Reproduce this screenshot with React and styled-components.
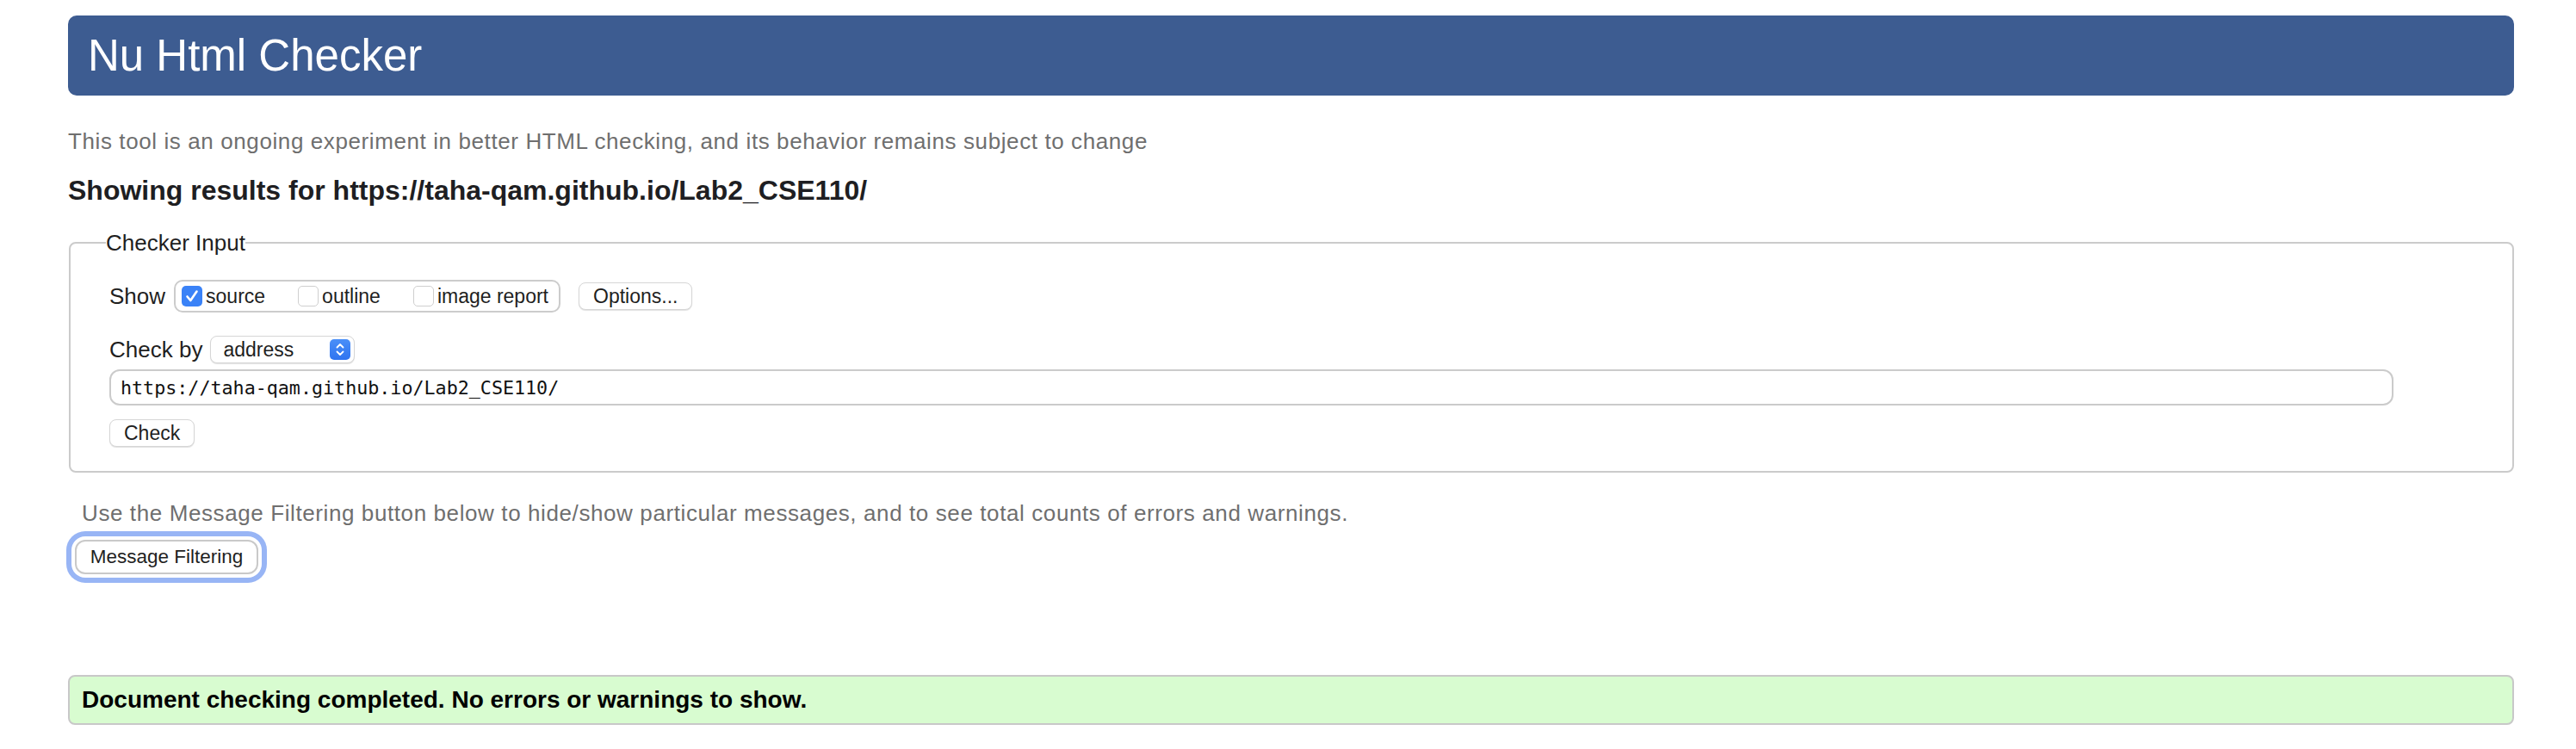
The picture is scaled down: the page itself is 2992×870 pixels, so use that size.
import styled, { createGlobalStyle } from "styled-components";

const GlobalStyle = createGlobalStyle`
  html, body {
    margin: 0;
    padding: 0;
    background: #fff;
  }
  body {
    font-family: "Liberation Sans", Arial, Helvetica, sans-serif;
    color: #1f1f1f;
  }
`;

const Page = styled.div`
  display: flex;
  flex-direction: column;
  padding: 18px 72px 0 79px;
`;

const Banner = styled.header`
  display: flex;
  align-items: center;
  height: 93px;
  padding-left: 23px;
  background: #3d5c91;
  border-radius: 10px;
`;

const Title = styled.h1`
  margin: 0;
  font-size: 51px;
  font-weight: 400;
  line-height: normal;
  color: #fff;
`;

const Note = styled.p`
  margin: ${(p) => p.$margin || "0"};
  font-size: 26px;
  line-height: 30px;
  letter-spacing: 0.6px;
  color: #6f6f6f;
`;

const ResultsHeading = styled.h2`
  margin: 24px 0 0;
  font-size: 32px;
  font-weight: 700;
  line-height: 37px;
  color: #1e1e22;
`;

const InputFieldset = styled.fieldset`
  margin: 27px 0 0 1px;
  padding: 28px 138px 28px 45px;
  border: 2px solid #cbcbcb;
  border-radius: 8px;
  display: flex;
  flex-direction: column;
  min-width: 0;
`;

const Legend = styled.legend`
  margin-left: -4px;
  padding: 0;
  font-size: 26px;
  line-height: 30px;
  color: #1f1f1f;
`;

const FormRow = styled.div`
  display: flex;
  align-items: center;
  gap: ${(p) => p.$gap || "10px"};
  margin-top: ${(p) => p.$top || "0"};
`;

const RowLabel = styled.span`
  font-size: 26px;
  line-height: 30px;
`;

const ToggleGroup = styled.div`
  display: flex;
  align-items: center;
  height: 38px;
  box-sizing: border-box;
  padding: 0 12px 0 7px;
  border: 2px solid #cccccc;
  border-radius: 10px;
  gap: 38px;
`;

const ToggleItem = styled.label`
  display: flex;
  align-items: center;
  gap: 4px;
  font-size: 23px;
  color: #1f1f1f;
`;

const Box = styled.span`
  display: inline-flex;
  align-items: center;
  justify-content: center;
  width: 24px;
  height: 24px;
  box-sizing: border-box;
  border-radius: 5px;
  background: ${(p) => (p.$checked ? "#3a82f7" : "#fff")};
  border: ${(p) => (p.$checked ? "none" : "1px solid #cfcfcf")};
`;

const PlainButton = styled.button`
  height: 32px;
  padding: 0 ${(p) => p.$pad || "16px"};
  margin-left: ${(p) => p.$left || "0"};
  font-family: "Liberation Sans", Arial, sans-serif;
  font-size: 23px;
  color: #1f1f1f;
  background: #fff;
  border: 1px solid #d6d6d6;
  border-radius: 8px;
  box-shadow: 0 1px 1px rgba(0, 0, 0, 0.12);
`;

const SelectBox = styled.div`
  display: flex;
  align-items: center;
  justify-content: space-between;
  width: 168px;
  height: 32px;
  box-sizing: border-box;
  padding: 0 4px 0 14px;
  background: #fff;
  border: 1px solid #d6d6d6;
  border-radius: 8px;
  box-shadow: 0 1px 1px rgba(0, 0, 0, 0.12);
  font-size: 23px;
`;

const Stepper = styled.span`
  display: inline-flex;
  align-items: center;
  justify-content: center;
  width: 24px;
  height: 24px;
  border-radius: 5px;
  background: linear-gradient(#4a8ff8, #2f74f0);
`;

const UrlInput = styled.input`
  margin-top: 7px;
  width: 100%;
  height: 42px;
  box-sizing: border-box;
  padding: 0 11px;
  border: 2px solid #cbcbcb;
  border-radius: 12px;
  font-family: "DejaVu Sans Mono", "Liberation Mono", monospace;
  font-size: 21.7px;
  color: #111;
  background: #fff;
  outline: none;
`;

const CheckRow = styled.div`
  display: flex;
  margin-top: 16px;
`;

const FilterWrap = styled.div`
  display: flex;
  margin: 16px 0 0 8px;
`;

const FilterButton = styled.button`
  height: 40px;
  width: 213px;
  padding: 0;
  font-family: "Liberation Sans", Arial, sans-serif;
  font-size: 22.5px;
  color: #1f1f1f;
  background: #fff;
  border: 2px solid #c9c9c9;
  border-radius: 12px;
  box-shadow: 0 0 0 4px #fff, 0 0 0 10px #98b5f5;
`;

const SuccessBox = styled.div`
  display: flex;
  align-items: center;
  margin-top: 117px;
  height: 58px;
  box-sizing: border-box;
  padding-left: 14px;
  background: #d8fcd0;
  border: 2px solid #c8c8c8;
  border-radius: 8px;
  font-size: 28px;
  font-weight: 700;
  color: #000;
`;

const Tick = () => (
  <svg width="20" height="20" viewBox="0 0 20 20">
    <path
      d="M4.5 10.5l3.8 4.5L15.5 4.5"
      fill="none"
      stroke="#fff"
      strokeWidth="2.6"
      strokeLinecap="round"
      strokeLinejoin="round"
    />
  </svg>
);

const Chevrons = () => (
  <svg width="14" height="20" viewBox="0 0 14 20">
    <path
      d="M3.5 7.5L7 4l3.5 3.5M3.5 12.5L7 16l3.5-3.5"
      fill="none"
      stroke="#fff"
      strokeWidth="1.8"
      strokeLinecap="round"
      strokeLinejoin="round"
    />
  </svg>
);

const toggles = [
  { label: "source", checked: true },
  { label: "outline", checked: false },
  { label: "image report", checked: false },
];

export default function App() {
  return (
    <Page>
      <GlobalStyle />
      <Banner>
        <Title>Nu Html Checker</Title>
      </Banner>
      <Note $margin="38px 0 0">
        This tool is an ongoing experiment in better HTML checking, and its
        behavior remains subject to change
      </Note>
      <ResultsHeading>
        Showing results for https://taha-qam.github.io/Lab2_CSE110/
      </ResultsHeading>

      <InputFieldset>
        <Legend>Checker Input</Legend>
        <FormRow>
          <RowLabel>Show</RowLabel>
          <ToggleGroup>
            {toggles.map((t) => (
              <ToggleItem key={t.label}>
                <Box $checked={t.checked}>{t.checked && <Tick />}</Box>
                {t.label}
              </ToggleItem>
            ))}
          </ToggleGroup>
          <PlainButton $left="11px">Options...</PlainButton>
        </FormRow>
        <FormRow $top="27px" $gap="9px">
          <RowLabel>Check by</RowLabel>
          <SelectBox>
            address
            <Stepper>
              <Chevrons />
            </Stepper>
          </SelectBox>
        </FormRow>
        <UrlInput readOnly value="https://taha-qam.github.io/Lab2_CSE110/" />
        <CheckRow>
          <PlainButton>Check</PlainButton>
        </CheckRow>
      </InputFieldset>

      <Note $margin="32px 0 0 16px">
        Use the Message Filtering button below to hide/show particular
        messages, and to see total counts of errors and warnings.
      </Note>
      <FilterWrap>
        <FilterButton>Message Filtering</FilterButton>
      </FilterWrap>

      <SuccessBox>
        Document checking completed. No errors or warnings to show.
      </SuccessBox>
    </Page>
  );
}
